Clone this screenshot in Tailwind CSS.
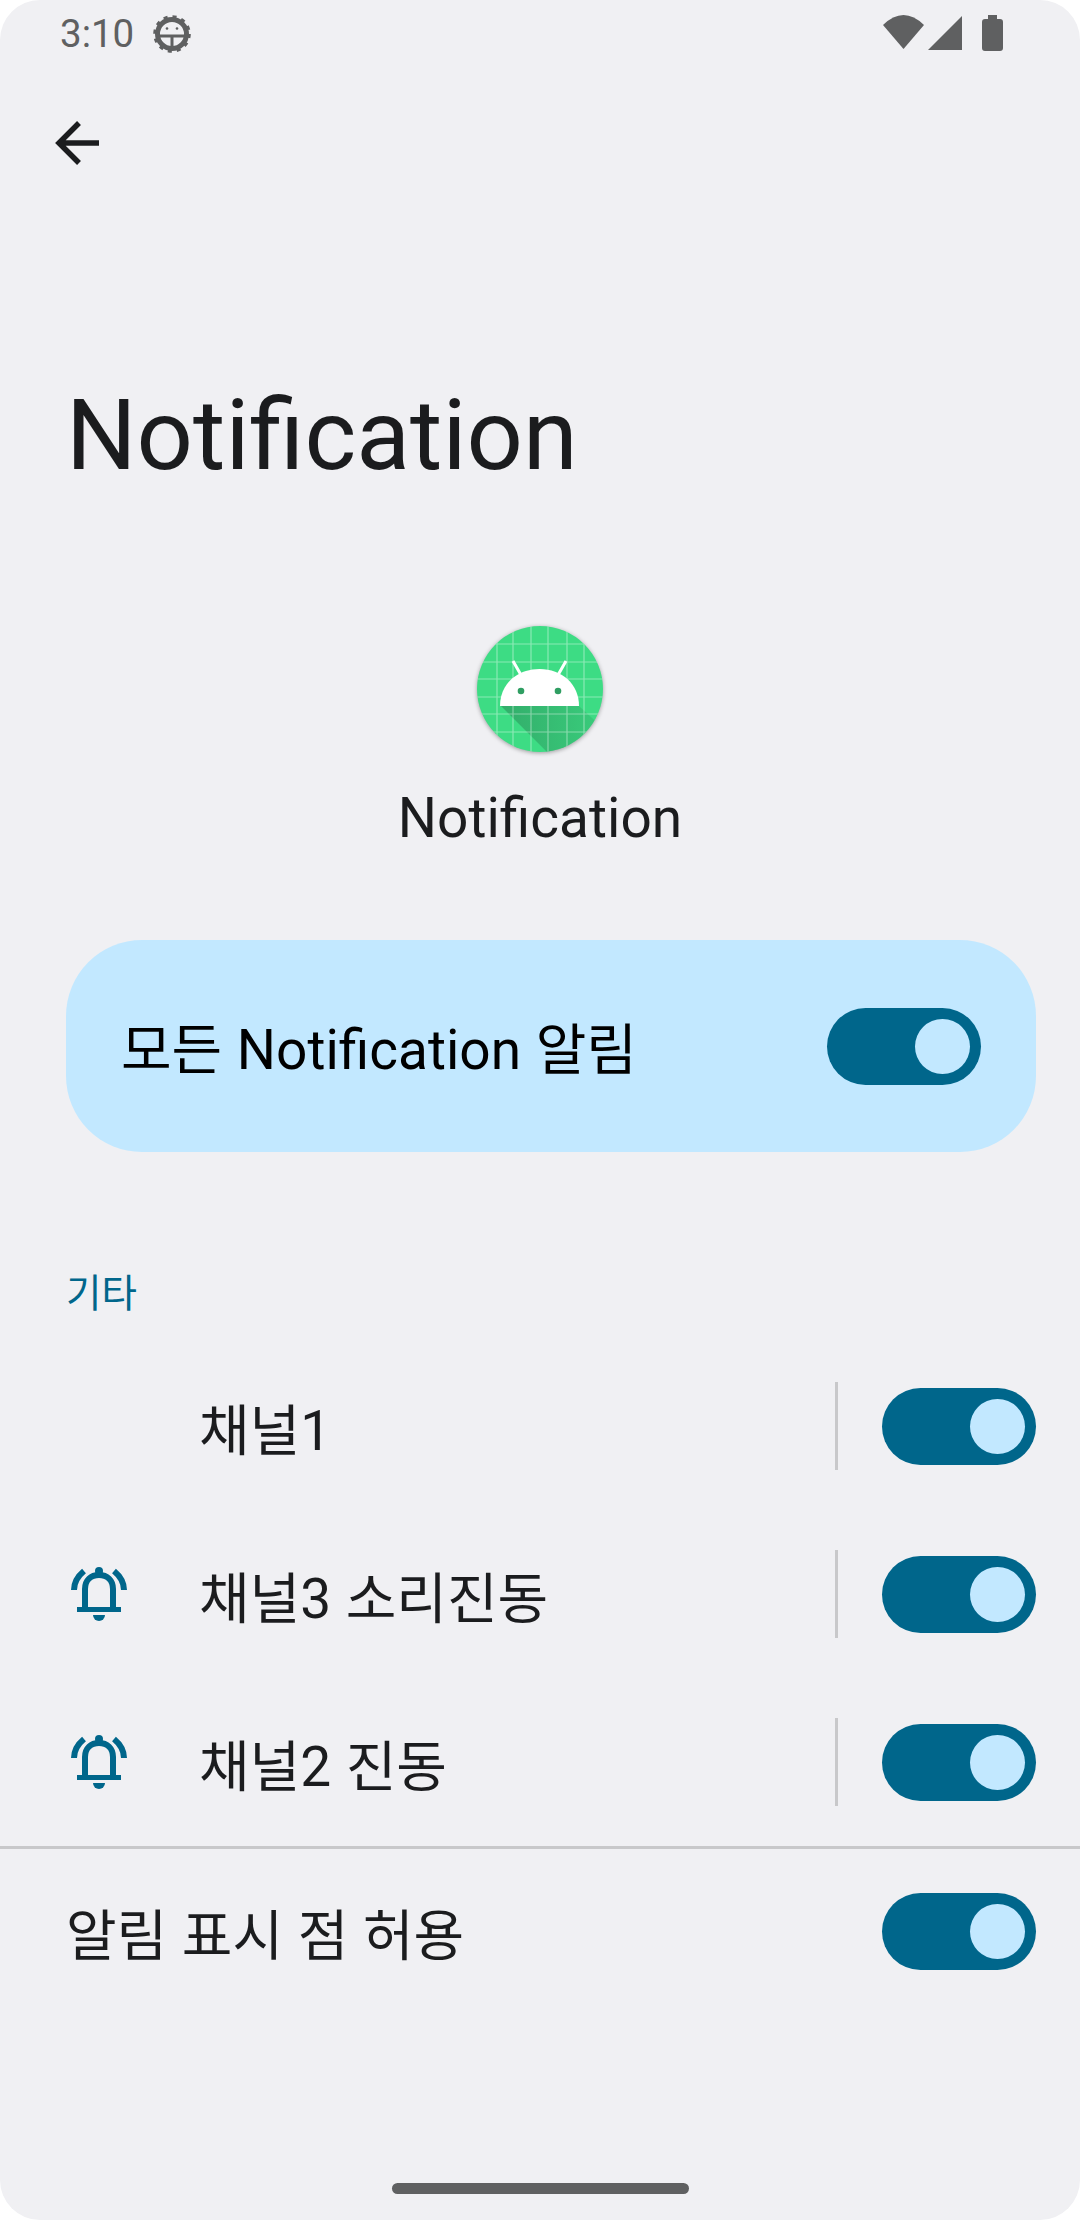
<!DOCTYPE html>
<html lang="ko">
<head>
<meta charset="utf-8"/>
<title>Notification</title>
<script src="https://cdn.jsdelivr.net/npm/@tailwindcss/browser@4"></script>
</head>
<body class="bg-white">
<div class="w-[1080px] h-[2220px] bg-[#f0f0f3] rounded-[40px] overflow-hidden flex flex-col font-['Roboto','Noto_Sans_CJK_KR',sans-serif] text-[#1b1c1e]">

  <!-- status bar -->
  <div class="h-[68px] shrink-0 flex items-center pl-[60px] pr-[77px] text-[#5f6061]">
    <span class="text-[38.500px] leading-none">3:10</span>
    <svg class="ml-[18px]" width="40" height="40" viewBox="0 0 40 40" fill="none">
      <circle cx="20" cy="20" r="14.500" stroke="#5f6061" stroke-width="5"/>
      <circle cx="20" cy="20" r="17" stroke="#5f6061" stroke-width="3.600" stroke-dasharray="4 4.900"/>
      <path d="M7 22H33M20 22V33" stroke="#5f6061" stroke-width="3"/>
      <circle cx="15" cy="14.500" r="1.300" fill="#5f6061"/>
      <circle cx="25" cy="14.500" r="1.300" fill="#5f6061"/>
    </svg>
    <svg class="ml-auto mb-[4px]" width="41" height="34" viewBox="0 0 41 34" fill="#5f6061"><path d="M0 10Q20.500 -10 41 10L20.500 34Z"/></svg>
    <svg class="ml-[4px] mb-[2px]" width="34" height="34" viewBox="0 0 34 34" fill="#5f6061"><path d="M34 0V34H0Z"/></svg>
    <svg class="ml-[20px] mb-[2px]" width="21" height="36" viewBox="0 0 21 36" fill="#5f6061"><path d="M6 0H15V4H18Q21 4 21 7V33Q21 36 18 36H3Q0 36 0 33V7Q0 4 3 4H6Z"/></svg>
  </div>

  <!-- back -->
  <div class="h-[72px] mt-[39px] shrink-0 pl-[55px] flex items-center">
    <svg width="44" height="44" viewBox="0 0 44 44" fill="none" stroke="#1b1c1e" stroke-width="5.500" class="overflow-visible"><path d="M44 22H4M24 2L4 22L24 42"/></svg>
  </div>

  <!-- title -->
  <h1 class="mt-[198px] pl-[66px] text-[99px] leading-[116px] font-normal">Notification</h1>

  <!-- app header -->
  <div class="mt-[133px] flex flex-col items-center">
    <svg width="126" height="126" viewBox="0 0 126 126" class="drop-shadow-[0_1px_2px_rgba(0,0,0,0.35)]">
      <defs>
        <clipPath id="c"><circle cx="63" cy="63" r="63"/></clipPath>
        <linearGradient id="s" x1="0" y1="0" x2="1" y2="0">
          <stop offset="0" stop-color="#2f9e62" stop-opacity="0.75"/>
          <stop offset="1" stop-color="#2f9e62" stop-opacity="0.25"/>
        </linearGradient>
      </defs>
      <g clip-path="url(#c)">
        <rect width="126" height="126" fill="#3ddc84"/>
        <path d="M24 80H102L126 102V126H70Z" fill="url(#s)"/>
        <path d="M20 0V126M36 0V126M54 0V126M71 0V126M90 0V126M107 0V126M0 18H126M0 36H126M0 53H126M0 71H126M0 88H126M0 106H126" stroke="#fff" stroke-opacity="0.4" stroke-width="1.200"/>
      </g>
      <path d="M23 80C23 58 40 43 62.500 43C85 43 102 58 102 80Z" fill="#fff"/>
      <path d="M36 35L44 49M89 35L81 49" stroke="#fff" stroke-width="3"/>
      <circle cx="44" cy="65" r="3.300" fill="#2f9e62"/>
      <circle cx="81" cy="65" r="3.300" fill="#2f9e62"/>
    </svg>
    <p class="mt-[33px] text-[55px] leading-[66px]">Notification</p>
  </div>

  <!-- main switch card -->
  <div class="mt-[89px] ml-[66px] mr-[44px] h-[212px] rounded-[76px] bg-[#c2e8ff] flex items-center justify-between pl-[55px] pr-[55px] text-[55px] text-black [word-spacing:1px]">
    <span class="pt-[8px]">모든 Notification 알림</span>
    <div class="w-[154px] h-[77px] rounded-full bg-[#00668b] flex items-center justify-end pr-[11px]"><div class="w-[55px] h-[55px] rounded-full bg-[#c2e8ff]"></div></div>
  </div>

  <!-- channels -->
  <p class="mt-[119px] pl-[66px] text-[38.500px] leading-[46px] text-[#00668b]">기타</p>

  <div class="mt-[25px] flex flex-col [word-spacing:1px]">
    <div class="h-[168px] flex items-center pl-[71px] pr-[44px]">
      <div class="w-[56px]"></div>
      <span class="ml-[72px] pt-[10px] text-[55px]">채널1</span>
      <div class="ml-auto w-[3px] h-[88px] bg-[#c8c8ca]"></div>
      <div class="ml-[44px] w-[154px] h-[77px] rounded-full bg-[#00668b] flex items-center justify-end pr-[11px]"><div class="w-[55px] h-[55px] rounded-full bg-[#c2e8ff]"></div></div>
    </div>
    <div class="h-[168px] flex items-center pl-[71px] pr-[44px]">
      <svg width="56" height="54" viewBox="0 0 56 54" fill="none" stroke="#00668b" stroke-width="6"><path d="M3 23C3 15 7 9 13 4M53 23C53 15 49 9 43 4M14 42V22C14 13 20 8 28 8C36 8 42 13 42 22V42"/><path d="M6 42.500H50" stroke-width="5"/><path d="M22 48H34A6 6 0 0 1 22 48Z" fill="#00668b" stroke="none"/><circle cx="28" cy="4" r="4" fill="#00668b" stroke="none"/></svg>
      <span class="ml-[72px] pt-[10px] text-[55px]">채널3 소리진동</span>
      <div class="ml-auto w-[3px] h-[88px] bg-[#c8c8ca]"></div>
      <div class="ml-[44px] w-[154px] h-[77px] rounded-full bg-[#00668b] flex items-center justify-end pr-[11px]"><div class="w-[55px] h-[55px] rounded-full bg-[#c2e8ff]"></div></div>
    </div>
    <div class="h-[168px] flex items-center pl-[71px] pr-[44px]">
      <svg width="56" height="54" viewBox="0 0 56 54" fill="none" stroke="#00668b" stroke-width="6"><path d="M3 23C3 15 7 9 13 4M53 23C53 15 49 9 43 4M14 42V22C14 13 20 8 28 8C36 8 42 13 42 22V42"/><path d="M6 42.500H50" stroke-width="5"/><path d="M22 48H34A6 6 0 0 1 22 48Z" fill="#00668b" stroke="none"/><circle cx="28" cy="4" r="4" fill="#00668b" stroke="none"/></svg>
      <span class="ml-[72px] pt-[10px] text-[55px]">채널2 진동</span>
      <div class="ml-auto w-[3px] h-[88px] bg-[#c8c8ca]"></div>
      <div class="ml-[44px] w-[154px] h-[77px] rounded-full bg-[#00668b] flex items-center justify-end pr-[11px]"><div class="w-[55px] h-[55px] rounded-full bg-[#c2e8ff]"></div></div>
    </div>
  </div>

  <div class="h-[3px] bg-[#c8c8ca]"></div>

  <div class="h-[164px] flex items-center justify-between pl-[66px] pr-[44px] text-[55px] [word-spacing:1px]">
    <span class="pt-[10px]">알림 표시 점 허용</span>
    <div class="w-[154px] h-[77px] rounded-full bg-[#00668b] flex items-center justify-end pr-[11px]"><div class="w-[55px] h-[55px] rounded-full bg-[#c2e8ff]"></div></div>
  </div>

  <!-- gesture bar -->
  <div class="mt-auto mb-[26px] mx-auto w-[297px] h-[11px] rounded-full bg-[#5f6061]"></div>
</div>
</body>
</html>
